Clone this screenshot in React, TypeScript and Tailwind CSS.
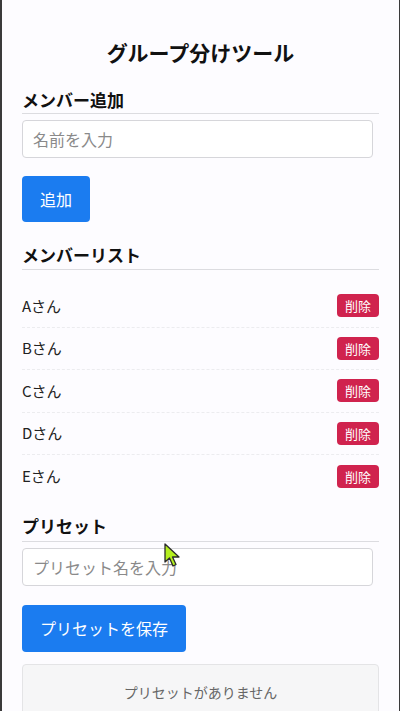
import React from "react";

const members = ["Aさん", "Bさん", "Cさん", "Dさん", "Eさん"];

function SectionTitle({ children, className = "" }: { children: React.ReactNode; className?: string }) {
  return (
    <h2 className={`text-[17px] leading-[25px] font-bold text-[#111] border-b border-[#dcdce0] ${className}`}>
      {children}
    </h2>
  );
}

export default function App() {
  return (
    <div
      className="relative min-h-screen bg-[#fdfcff] border-l-2 border-r border-[#3a3a3a] pl-[20px] pr-[20px] pb-10 overflow-hidden"
      style={{ fontFamily: '"Noto Sans CJK JP", "Noto Sans", sans-serif' }}
    >
      <h1 className="pt-[36px] text-center text-[21px] leading-[32px] font-bold text-[#111]">
        グループ分けツール
      </h1>

      {/* member add */}
      <SectionTitle className="mt-[19px] pb-[1px]">メンバー追加</SectionTitle>
      <input
        className="mt-[6px] block w-[351px] h-[38px] rounded-[4px] border border-[#d6d6da] bg-white px-[10px] text-[16px] placeholder:text-[#8a8a8a] outline-none"
        placeholder="名前を入力"
      />
      <button className="mt-[18px] h-[46px] px-[18px] rounded-[4px] bg-[#1b7cf0] text-white text-[16px]">
        追加
      </button>

      {/* member list */}
      <SectionTitle className="mt-[20px] pb-[2px]">メンバーリスト</SectionTitle>
      <ul className="mt-[15px]">
        {members.map((m, i) => (
          <li
            key={m}
            className={`flex items-center justify-between h-[42.5px] ${
              i < members.length - 1 ? "border-b border-dashed border-[#ececef]" : ""
            }`}
          >
            <span className="text-[15px] text-[#222]">{m}</span>
            <button className="h-[23px] px-[8px] rounded-[4px] bg-[#d0234e] text-white text-[13px] leading-[23px]">
              削除
            </button>
          </li>
        ))}
      </ul>

      {/* presets */}
      <SectionTitle className="mt-[15px] pb-[3px]">プリセット</SectionTitle>
      <input
        className="mt-[6px] block w-[351px] h-[38px] rounded-[4px] border border-[#d6d6da] bg-white px-[10px] text-[16px] placeholder:text-[#8a8a8a] outline-none"
        placeholder="プリセット名を入力"
      />
      <button className="mt-[19px] h-[47px] px-[18px] rounded-[4px] bg-[#1b7cf0] text-white text-[16px]">
        プリセットを保存
      </button>
      <div className="mt-[12px] rounded-[4px] border border-[#e4e4e6] bg-[#f6f6f7] pt-[15px] pb-[20px] text-center text-[14px] leading-[24px] text-[#666]">
        プリセットがありません
      </div>

      {/* mouse cursor overlay */}
      <svg className="absolute left-[162px] top-[543px]" width="18" height="26" viewBox="0 0 18 26">
        <path
          d="M1 1 L1 19 L5.5 15 L9 23 L12 21.5 L8.5 14 L15 14 Z"
          fill="#b4ef1e"
          stroke="#2a2a2a"
          strokeWidth="1.3"
          strokeLinejoin="round"
        />
      </svg>
    </div>
  );
}
